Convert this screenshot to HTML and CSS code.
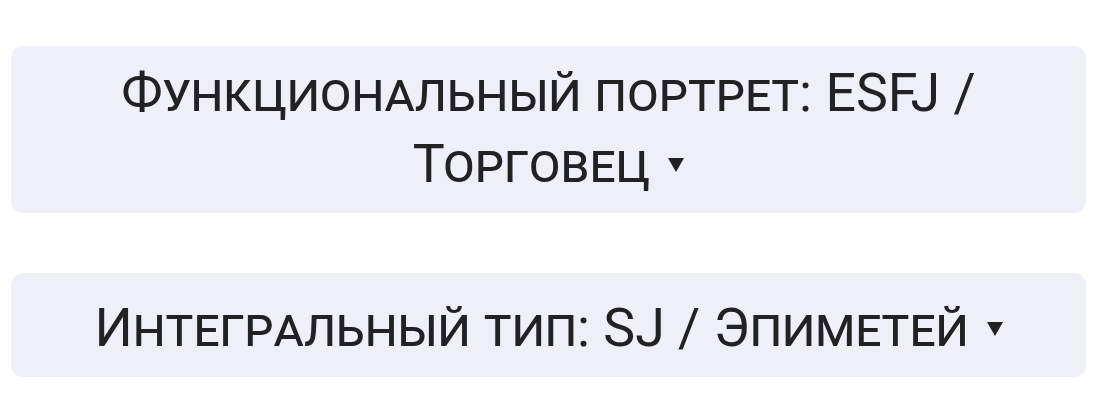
FILE: index.html
```html
<!DOCTYPE html>
<html lang="ru">
<head>
<meta charset="utf-8">
<link rel="stylesheet" href="styles.css">
</head>
<body>
<div class="list">
  <div class="card card-wrap">
    <span class="title">Функциональный портрет: ESFJ / Торговец<svg class="caret" viewBox="0 0 16 14" width="16" height="14"><path d="M0 0H16L8 14Z"/></svg></span>
  </div>
  <div class="card card-single">
    <span class="title">Интегральный тип: SJ / Эпиметей<svg class="caret" viewBox="0 0 16 14" width="16" height="14"><path d="M0 0H16L8 14Z"/></svg></span>
  </div>
</div>
</body>
</html>
```
FILE: styles.css
```css
html, body {
  margin: 0;
  background: #ffffff;
}
body {
  font-family: Roboto, "Noto Sans", sans-serif;
  color: #222224;
}
.list {
  display: flex;
  flex-direction: column;
  gap: 60px;
  padding: 46px 12px 0 11px;
}
.card {
  background: #efeff7;
  border-radius: 12px;
  text-align: center;
  font-size: 53.7px;
  line-height: 71px;
  font-variant: small-caps;
  padding: 0 40px 14px;
}
.card-wrap {
  padding-top: 11px;
}
.card-single {
  padding-top: 19px;
}
.caret {
  fill: #222224;
  margin-left: 18px;
  vertical-align: 10px;
}
```
